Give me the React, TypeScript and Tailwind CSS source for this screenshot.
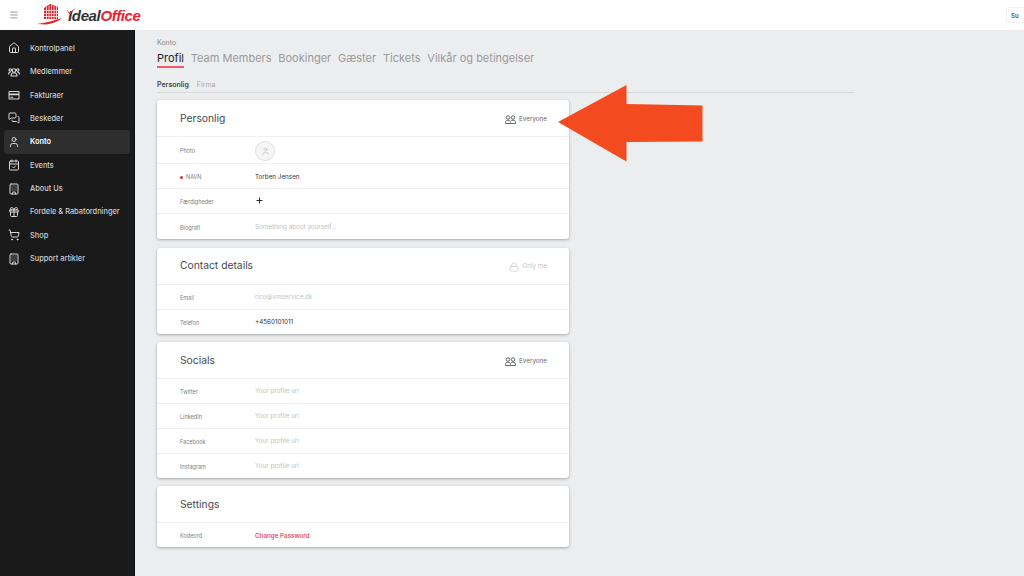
import { useState } from "react";
import type { ReactNode } from "react";
import { Building, CalendarCheck, Gift, House, Lock, Menu, MessagesSquare, Plus, ShoppingCart, User } from "lucide-react";

function GroupIcon({ size, className }: { size: number; strokeWidth?: number; className?: string }) {
  return (
    <svg width={size} height={size} viewBox="0 0 24 24" fill="none" stroke="currentColor" strokeWidth="2.2" className={className}>
      <circle cx="12" cy="9" r="3.500" />
      <path d="M6 20c0-4 2.500-6.500 6-6.500s6 2.500 6 6.500z" />
      <circle cx="4.500" cy="8" r="2.500" />
      <circle cx="19.500" cy="8" r="2.500" />
      <path d="M1 17c0-3 1.500-5 4.500-5M23 17c0-3-1.500-5-4.500-5" />
    </svg>
  );
}

function CardIcon({ size, className }: { size: number; strokeWidth?: number; className?: string }) {
  return (
    <svg width={size} height={size} viewBox="0 0 24 24" className={className}>
      <rect x="1" y="4" width="22" height="17" rx="1.500" fill="currentColor" />
      <rect x="3" y="6" width="18" height="3" fill="#1a1a1a" />
      <rect x="3" y="12.500" width="18" height="6.500" fill="#1a1a1a" />
      <rect x="4.500" y="15.500" width="6" height="2" fill="currentColor" />
    </svg>
  );
}

function EveryoneIcon() {
  return (
    <svg width="11" height="9" viewBox="0 0 22 18" fill="none" stroke="#555" strokeWidth="1.800" className="shrink-0">
      <circle cx="6" cy="5" r="3.500" />
      <path d="M1 17v-2c0-3 2-4.500 5-4.500s5 1.500 5 4.500v2z" />
      <circle cx="16" cy="5" r="3.500" />
      <path d="M11 17h10v-2c0-3-2-4.500-5-4.500-1.500 0-2.800.4-3.700 1.100" />
    </svg>
  );
}

const navItems = [
  { label: "Kontrolpanel", icon: House },
  { label: "Medlemmer", icon: GroupIcon },
  { label: "Fakturaer", icon: CardIcon },
  { label: "Beskeder", icon: MessagesSquare },
  { label: "Konto", icon: User, active: true },
  { label: "Events", icon: CalendarCheck },
  { label: "About Us", icon: Building },
  { label: "Fordele & Rabatordninger", icon: Gift },
  { label: "Shop", icon: ShoppingCart },
  { label: "Support artikler", icon: Building },
];

const tabs = ["Profil", "Team Members", "Bookinger", "Gæster", "Tickets", "Vilkår og betingelser"];

const rowHeights = { tall: "h-[27px]", normal: "h-[25px]", short: "h-[24px]" };

function Logo() {
  return (
    <div className="flex items-center">
      <svg width="26" height="22" viewBox="0 0 26 22" className="mt-[-2px]">
        <path d="M7 5l6-4 8 3v12H7z" fill="#d9282f" />
        <path d="M9.500 4v12M12 2.500v13.500M14.500 2v14M17 3v13M19.500 3.500v12.500" stroke="#fff" strokeWidth="0.7" />
        <path d="M7 7.500h14M7 10.500h14M7 13.500h14" stroke="#fff" strokeWidth="0.7" />
        <path d="M0 21c8-1 15-3 25-6-5 4-10 6-16 6.500z" fill="#e8232b" />
      </svg>
      <span className="relative ml-[5px] mt-[1px] text-[15px] leading-none font-bold italic tracking-[-0.35px] text-[#333] [font-family:'Liberation_Sans',sans-serif]">
        <svg width="10" height="7" viewBox="0 0 10 7" className="absolute left-[-2px] top-[0px]">
          <path d="M0 1.500 3.500 4.500 9.500 0 4 6.500z" fill="#e8232b" />
        </svg>
        Ideal<span className="text-[#e8232b]">Office</span>
      </span>
    </div>
  );
}

function Sidebar() {
  return (
    <aside className="flex w-[135px] shrink-0 flex-col border-r border-[#0c0c0c] bg-[#1a1a1a] px-[4px] pt-[6.600px]">
      {navItems.map((item) => {
        const Icon = item.icon;
        return (
          <div
            key={item.label}
            className={`flex h-[23.4px] items-center gap-[10px] rounded-[3px] pl-[4px] text-[7.4px] font-medium ${
              item.active ? "bg-[#2e2e2e] font-semibold text-white" : "text-[#cfcfcf]"
            }`}
          >
            <Icon size={12} strokeWidth={2} className="shrink-0 text-[#d8d8d8]" />
            <span>{item.label}</span>
          </div>
        );
      })}
    </aside>
  );
}

function Card({ title, access, children }: { title: string; access?: "everyone" | "me"; children: ReactNode }) {
  return (
    <section className="rounded-[3px] bg-white shadow-[0_1px_3px_rgba(0,0,0,0.3)]">
      <div className="flex h-[37px] items-center justify-between border-b border-[#f0f0f0] pl-[23px] pr-[22px]">
        <h2 className="pt-[1px] text-[10.300px] text-[#444a50]">{title}</h2>
        {access === "everyone" && (
          <div className="flex items-center gap-[3px] pt-[3px] text-[6.300px] text-[#666]">
            <EveryoneIcon />
            <span>Everyone</span>
          </div>
        )}
        {access === "me" && (
          <div className="flex items-center gap-[3px] pt-[3px] text-[6.300px] text-[#c4c4c4]">
            <Lock size={10} strokeWidth={1.6} />
            <span>Only me</span>
          </div>
        )}
      </div>
      {children}
    </section>
  );
}

function Row({
  label,
  children,
  size = "normal",
  last,
}: {
  label: ReactNode;
  children: ReactNode;
  size?: keyof typeof rowHeights;
  last?: boolean;
}) {
  return (
    <div className={`flex items-center pl-[23px] pt-[2px] ${rowHeights[size]} ${last ? "" : "border-b border-[#f0f0f0]"}`}>
      <div className="w-[75px] shrink-0 text-[5.500px] text-[#808080]">{label}</div>
      <div className="text-[6.300px]">{children}</div>
    </div>
  );
}

const Muted = ({ children }: { children: ReactNode }) => <span className="text-[#c2c2c2]">{children}</span>;

export default function App() {
  const [activeTab] = useState("Profil");

  return (
    <div className="relative flex h-[576px] w-[1024px] flex-col overflow-hidden bg-[#ecedef] [font-family:Inter,sans-serif]">
      <header className="flex h-[30px] shrink-0 items-center bg-white pl-[9px]">
        <Menu size={10} strokeWidth={1.5} className="text-[#666]" />
        <div className="ml-[18px]">
          <Logo />
        </div>
        <div className="ml-auto flex h-[16px] w-[18px] items-center rounded-l-[3px] border border-r-0 border-[#f2f2f2] pl-[4px] text-[6px] font-semibold text-[#555]">
          Su
        </div>
      </header>

      <div className="flex min-h-0 flex-1">
        <Sidebar />

        <main className="flex-1 pl-[22px] pr-[170px] pt-[8px]">
          <div className="text-[7px] leading-[9px] text-[#8a8a8a]">Konto</div>

          <nav className="mt-[3px] flex gap-[6.800px] text-[11px] leading-[16px] text-[#9a9a9a]">
            {tabs.map((tab) => (
              <div key={tab} className={tab === activeTab ? "border-b-2 border-[#ee5a66] text-[#222]" : ""}>
                {tab}
              </div>
            ))}
          </nav>

          <div className="mt-[12px] flex h-[13px] gap-[8px] border-b border-[#d6d7d9] text-[7px] leading-[10px]">
            <span className="font-semibold text-[#444]">Personlig</span>
            <span className="text-[#aaa]">Firma</span>
          </div>

          <div className="mt-[7.400px] flex w-[412px] flex-col gap-[8.300px]">
            <Card title="Personlig" access="everyone">
              <Row label="Photo" size="tall">
                <div className="flex h-[20px] w-[20px] items-center justify-center rounded-full border border-[#ddd] bg-[#f6f6f6]">
                  <User size={9} strokeWidth={1.3} className="text-[#aaa]" />
                </div>
              </Row>
              <Row
                label={
                  <span className="flex items-center gap-[3px]">
                    <span className="h-[3px] w-[3px] rounded-full bg-[#e8232b]" />
                    NAVN
                  </span>
                }
              >
                <span className="text-[#333]">Torben Jensen</span>
              </Row>
              <Row label="Færdigheder">
                <Plus size={9} strokeWidth={2.6} className="mt-[-3px] text-[#1e2a2a]" />
              </Row>
              <Row label="Biografi" last>
                <Muted>Something about yourself...</Muted>
              </Row>
            </Card>

            <Card title="Contact details" access="me">
              <Row label="Email">
                <Muted>rico@vmservice.dk</Muted>
              </Row>
              <Row label="Telefon" size="short" last>
                <span className="text-[#333]">+4560101011</span>
              </Row>
            </Card>

            <Card title="Socials" access="everyone">
              <Row label="Twitter">
                <Muted>Your profile url</Muted>
              </Row>
              <Row label="LinkedIn">
                <Muted>Your profile url</Muted>
              </Row>
              <Row label="Facebook">
                <Muted>Your profile url</Muted>
              </Row>
              <Row label="Instagram" size="short" last>
                <Muted>Your profile url</Muted>
              </Row>
            </Card>

            <Card title="Settings">
              <Row label="Kodeord" size="short" last>
                <span className="font-medium text-[#f0364a]">Change Password</span>
              </Row>
            </Card>
          </div>
        </main>
      </div>

      {/* annotation arrow on top of the page */}
      <svg width="146" height="78" viewBox="0 0 146 78" className="absolute left-[558px] top-[84px]">
        <path d="M0 38 68.500 1v19l76 1.500v36l-76 .5v19.500z" fill="#f34a1f" />
      </svg>
    </div>
  );
}
